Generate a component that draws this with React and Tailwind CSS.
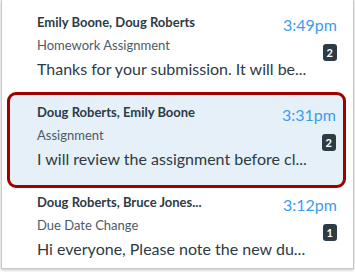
import React from "react";

const font = { fontFamily: "Lato, 'Open Sans', sans-serif" };

function Row({ name, time, subject, body, count }) {
  return (
    <div className="flex justify-between">
      <div className="flex flex-col min-w-0">
        <div className="text-[13px] font-bold leading-[16px] text-[#2d3b45]">{name}</div>
        <div className="mt-[5px] text-[13px] leading-[20px] text-[#4b5b66]">{subject}</div>
        <div className="mt-[3px] text-[16px] leading-[22px] text-[#2d3b45] whitespace-nowrap">{body}</div>
      </div>
      <div className="flex flex-col items-end">
        <div className="mt-[1px] text-[16px] leading-[20px] text-[#3a9cf0]">{time}</div>
        <div className="mt-[9px] flex h-[17px] min-w-[14px] items-center justify-center rounded-[3px] bg-[#2d3b45] px-[4px] text-[11px] font-bold leading-none text-white">
          {count}
        </div>
      </div>
    </div>
  );
}

export default function App() {
  return (
    <div className="w-[355px] h-[272px] bg-white overflow-hidden" style={font}>
      <div className="ml-[1px] w-[353px] h-[269px] border-x border-b border-[#c8c8c8] bg-white shadow-[0_1px_3px_rgba(0,0,0,0.25)]">
        <div className="h-[92px] pt-[14px] pl-[35px] pr-[16px]">
          <Row
            name="Emily Boone, Doug Roberts"
            time="3:49pm"
            subject="Homework Assignment"
            body="Thanks for your submission. It will be..."
            count="2"
          />
        </div>
        <div className="ml-[5px] w-[339px] h-[96px] rounded-[9px] border-[3px] border-[#a00000] bg-[#e6f0f8] pt-[9px] pl-[27px] pr-[7px]">
          <Row
            name="Doug Roberts, Emily Boone"
            time="3:31pm"
            subject="Assignment"
            body="I will review the assignment before cl..."
            count="2"
          />
        </div>
        <div className="pt-[6px] pl-[35px] pr-[16px]">
          <Row
            name="Doug Roberts, Bruce Jones..."
            time="3:12pm"
            subject="Due Date Change"
            body="Hi everyone, Please note the new du..."
            count="1"
          />
        </div>
      </div>
    </div>
  );
}
